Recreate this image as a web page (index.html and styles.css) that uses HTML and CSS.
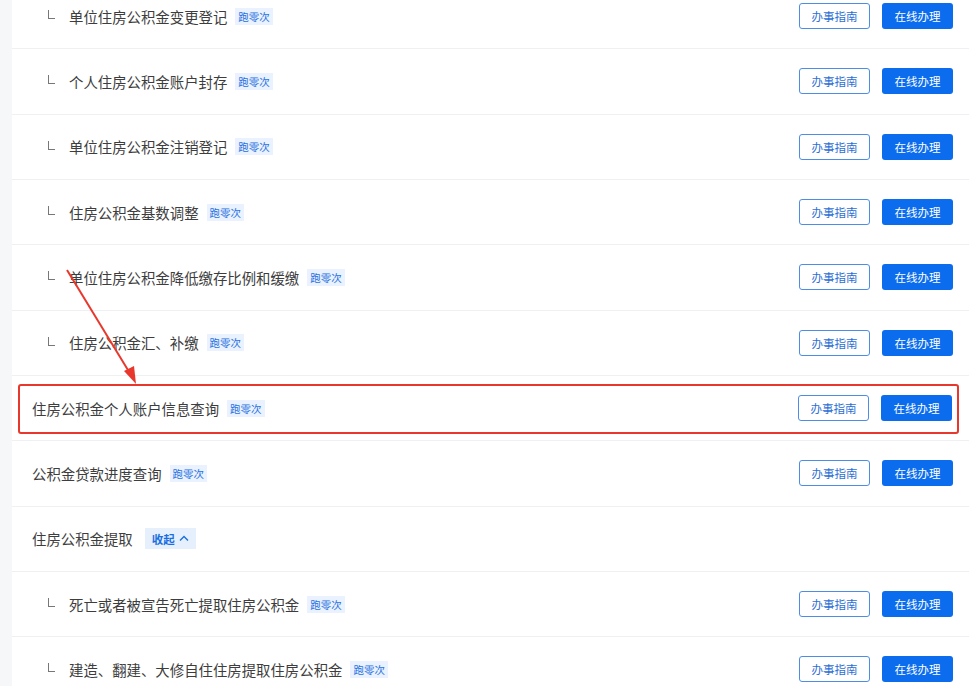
FILE: index.html
```html
<!DOCTYPE html>
<html lang="zh-CN">
<head>
    <meta charset="UTF-8">
    <title>住房公积金事项</title>
    <link rel="stylesheet" href="styles.css">
</head>
<body>
    <div class="panel">
        <div class="row sub">
            <span class="branch"></span>
            <span class="name">单位住房公积金变更登记</span><span class="tag">跑零次</span>
            <div class="actions"><a class="btn btn-line">办事指南</a><a class="btn btn-fill">在线办理</a></div>
        </div>
        <div class="row sub">
            <span class="branch"></span>
            <span class="name">个人住房公积金账户封存</span><span class="tag">跑零次</span>
            <div class="actions"><a class="btn btn-line">办事指南</a><a class="btn btn-fill">在线办理</a></div>
        </div>
        <div class="row sub">
            <span class="branch"></span>
            <span class="name">单位住房公积金注销登记</span><span class="tag">跑零次</span>
            <div class="actions"><a class="btn btn-line">办事指南</a><a class="btn btn-fill">在线办理</a></div>
        </div>
        <div class="row sub">
            <span class="branch"></span>
            <span class="name">住房公积金基数调整</span><span class="tag">跑零次</span>
            <div class="actions"><a class="btn btn-line">办事指南</a><a class="btn btn-fill">在线办理</a></div>
        </div>
        <div class="row sub">
            <span class="branch"></span>
            <span class="name">单位住房公积金降低缴存比例和缓缴</span><span class="tag">跑零次</span>
            <div class="actions"><a class="btn btn-line">办事指南</a><a class="btn btn-fill">在线办理</a></div>
        </div>
        <div class="row sub">
            <span class="branch"></span>
            <span class="name">住房公积金汇、补缴</span><span class="tag">跑零次</span>
            <div class="actions"><a class="btn btn-line">办事指南</a><a class="btn btn-fill">在线办理</a></div>
        </div>
        <div class="row marked">
            <span class="name">住房公积金个人账户信息查询</span><span class="tag">跑零次</span>
            <div class="actions"><a class="btn btn-line">办事指南</a><a class="btn btn-fill">在线办理</a></div>
            <div class="mark-box"></div>
        </div>
        <div class="row">
            <span class="name">公积金贷款进度查询</span><span class="tag">跑零次</span>
            <div class="actions"><a class="btn btn-line">办事指南</a><a class="btn btn-fill">在线办理</a></div>
        </div>
        <div class="row">
            <span class="name">住房公积金提取</span>
            <span class="toggle">收起
                <svg width="10" height="7" viewBox="0 0 10 7"><path d="M1 5.5 L5 1.5 L9 5.5" fill="none" stroke="#1a6fe0" stroke-width="1.4"/></svg>
            </span>
        </div>
        <div class="row sub">
            <span class="branch"></span>
            <span class="name">死亡或者被宣告死亡提取住房公积金</span><span class="tag">跑零次</span>
            <div class="actions"><a class="btn btn-line">办事指南</a><a class="btn btn-fill">在线办理</a></div>
        </div>
        <div class="row sub">
            <span class="branch"></span>
            <span class="name">建造、翻建、大修自住住房提取住房公积金</span><span class="tag">跑零次</span>
            <div class="actions"><a class="btn btn-line">办事指南</a><a class="btn btn-fill">在线办理</a></div>
        </div>
    </div>

    <!-- annotation arrow -->
    <svg class="arrow" width="969" height="686" viewBox="0 0 969 686">
        <line x1="67" y1="270" x2="131" y2="375" stroke="#e8382d" stroke-width="2"/>
        <path d="M136 384 L124 371 L134 366 Z" fill="#e8382d"/>
    </svg>
</body>
</html>
```

FILE: styles.css
```css
body {
    margin: 0;
    padding: 0;
    background-color: #f6f7f9;
    font-family: "Noto Sans CJK SC", "Noto Sans", sans-serif;
    overflow: hidden;
}

.panel {
    margin-left: 12px;
    margin-top: -16px;
    background: white;
}

.row {
    position: relative;
    display: flex;
    align-items: center;
    height: 65.33px;
    box-sizing: border-box;
    padding: 0 16px 0 20px;
    border-bottom: 1px solid #eef0f3;
}

.row.sub {
    padding-left: 36px;
}

.branch {
    width: 6px;
    height: 8px;
    border-left: 1px solid #777;
    border-bottom: 1px solid #777;
    margin-right: 14px;
    margin-top: -3px;
}

.name {
    font-size: 14.4px;
    color: #3d3d3d;
}

.tag {
    margin-left: 8px;
    padding: 0 3px;
    font-size: 10.5px;
    line-height: 17px;
    color: #1f6fe0;
    background-color: #e9f2fe;
}

.toggle {
    display: flex;
    align-items: center;
    gap: 4px;
    margin-left: 12px;
    padding: 0 7px;
    height: 21px;
    font-size: 11.5px;
    font-weight: bold;
    color: #1a6fe0;
    background-color: #e6f0fd;
}

.actions {
    margin-left: auto;
    display: flex;
    gap: 12px;
}

.btn {
    display: flex;
    align-items: center;
    justify-content: center;
    width: 71px;
    height: 26px;
    box-sizing: border-box;
    border-radius: 3px;
    font-size: 11.5px;
    cursor: pointer;
}

.btn-line {
    border: 1px solid #4d8de6;
    color: #2c6fd4;
    background: white;
}

.btn-fill {
    background-color: #0b6cee;
    color: white;
}

.marked .actions {
    margin-right: 1px;
}

.mark-box {
    position: absolute;
    left: 6px;
    right: 10px;
    top: 8px;
    bottom: 6px;
    border: 2px solid #e8382d;
    border-radius: 3px;
    pointer-events: none;
}

.arrow {
    position: absolute;
    left: 0;
    top: 0;
    pointer-events: none;
}
```
